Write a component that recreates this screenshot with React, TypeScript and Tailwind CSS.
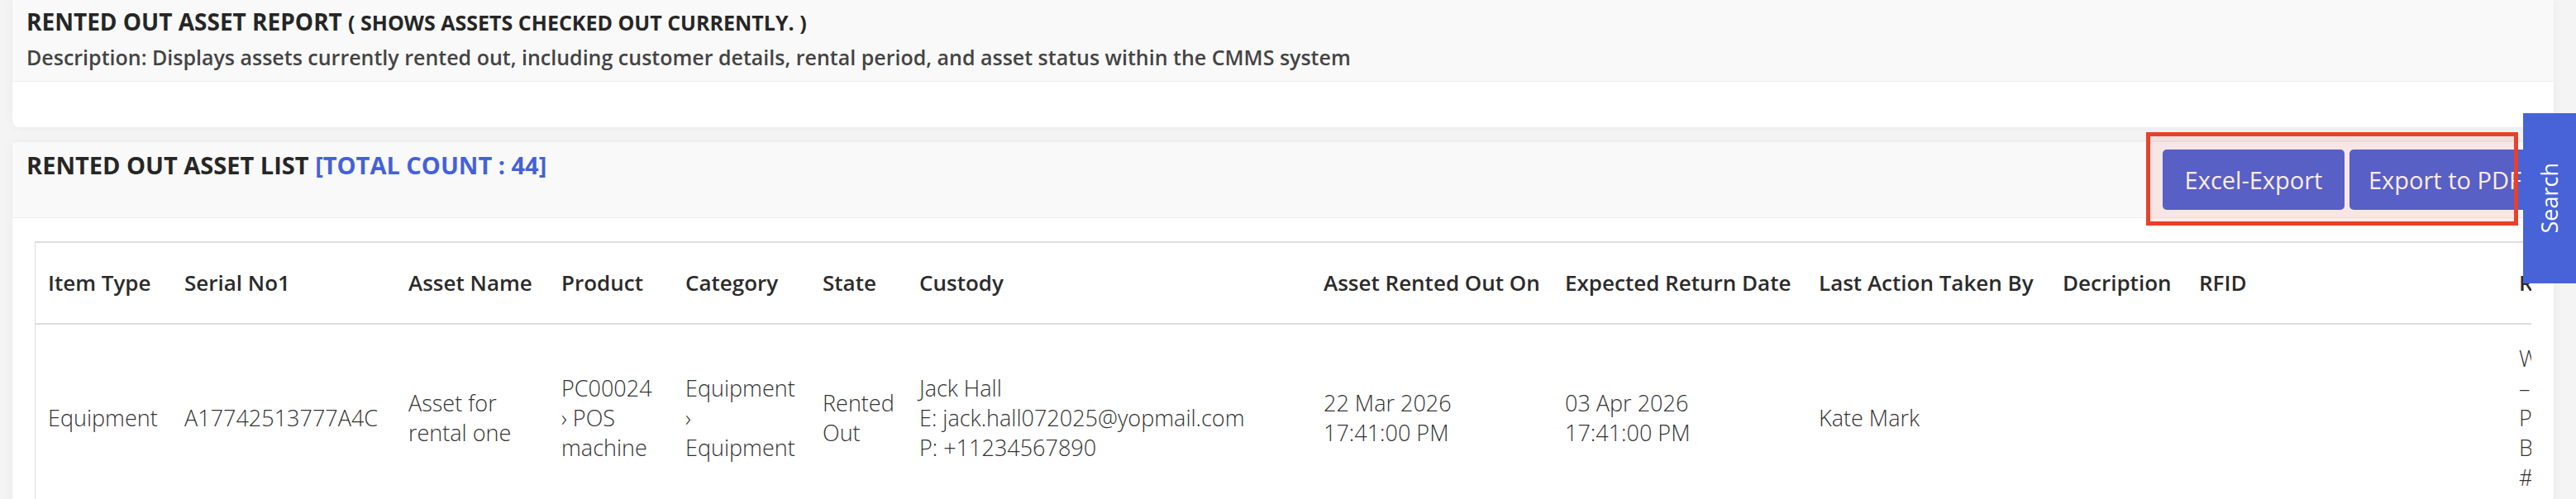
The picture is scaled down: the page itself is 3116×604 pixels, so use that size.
import { Fragment } from 'react';

type Column = { label: string; width: string };

const columns: Column[] = [
  { label: 'Item Type', width: 'w-[165px]' },
  { label: 'Serial No1', width: 'w-[271px]' },
  { label: 'Asset Name', width: 'w-[185px]' },
  { label: 'Product', width: 'w-[150px]' },
  { label: 'Category', width: 'w-[166px]' },
  { label: 'State', width: 'w-[117px]' },
  { label: 'Custody', width: 'w-[489px]' },
  { label: 'Asset Rented Out On', width: 'w-[292px]' },
  { label: 'Expected Return Date', width: 'w-[307px]' },
  { label: 'Last Action Taken By', width: 'w-[295px]' },
  { label: 'Decription', width: 'w-[165px]' },
  { label: 'RFID', width: 'w-[387px]' },
  { label: 'Remarks', width: 'w-[260px]' },
];

// one rented-out asset, each cell split in the lines it wraps to
const rows: string[][][] = [
  [
    ['Equipment'],
    ['A17742513777A4C'],
    ['Asset for', 'rental one'],
    ['PC00024', '› POS', 'machine'],
    ['Equipment', '›', 'Equipment'],
    ['Rented', 'Out'],
    ['Jack Hall', 'E: jack.hall072025@yopmail.com', 'P: +11234567890'],
    ['22 Mar 2026', '17:41:00 PM'],
    ['03 Apr 2026', '17:41:00 PM'],
    ['Kate Mark'],
    [],
    [],
    ['Walk-in', '–', 'Pos', 'Booking', '#RT-1024'],
  ],
];

export default function App() {
  return (
    <div className="relative min-h-screen w-[3116px] overflow-hidden bg-[#f4f4f4] font-['Open_Sans',sans-serif]">
      <div className="pl-[15px] pr-[27px]">
        {/* report heading card */}
        <div className="rounded-b-[8px] bg-white shadow-[0_0_12px_rgba(0,0,0,0.05)]">
          <div className="h-[99px] border-b border-[#ededf5] bg-[#f9f9f9] pl-[17px] pt-[7px]">
            <h1 className="text-[28px] leading-[38px] font-bold text-[#262626]">
              RENTED OUT ASSET REPORT <span className="text-[25px]">( SHOWS ASSETS CHECKED OUT CURRENTLY. )</span>
            </h1>
            <p className="mt-[8px] text-[25px] leading-[30px] font-semibold text-[#444444]">
              Description: Displays assets currently rented out, including customer details, rental period, and asset status within the CMMS system
            </p>
          </div>
          <div className="h-[55px]" />
        </div>

        {/* list card */}
        <div className="mt-[18px] rounded-t-[6px] bg-white shadow-[0_0_12px_rgba(0,0,0,0.05)]">
          <div className="flex h-[92px] items-start justify-between border-b border-[#ececec] bg-[#f9f9f9] pl-[17px] pr-[15px] pt-[9px]">
            <h2 className="text-[29px] leading-[38px] font-bold text-[#262626]">
              RENTED OUT ASSET LIST <span className="text-[#4461d8]">[TOTAL COUNT : 44]</span>
            </h2>
            <div className="flex gap-[6px]">
              <button className="h-[73px] w-[220px] rounded-[5px] bg-[#4863d7] text-[29px] font-normal text-white">
                Excel-Export
              </button>
              <button className="h-[73px] w-[232px] whitespace-nowrap rounded-[5px] bg-[#4863d7] pl-[23px] text-left text-[29px] font-normal text-white">
                Export to PDF
              </button>
            </div>
          </div>

          <div className="px-[27px] pt-[28px]">
            <div className="overflow-hidden border-t-2 border-l border-[#dddddd]">
              <table className="w-[3249px] table-fixed border-collapse">
                <thead>
                  <tr>
                    {columns.map((c) => (
                      <th
                        key={c.label}
                        className={`${c.width} h-[98px] whitespace-nowrap border-b-2 border-[#dddddd] px-[15px] text-left align-middle text-[26px] font-semibold text-[#2b2b2b]`}
                      >
                        {c.label}
                      </th>
                    ))}
                  </tr>
                </thead>
                <tbody>
                  {rows.map((row, i) => (
                    <tr key={i}>
                      {row.map((lines, j) => (
                        <td
                          key={j}
                          className="whitespace-nowrap px-[15px] py-[23px] align-middle text-[27px] leading-[36px] font-light text-[#333333]"
                        >
                          {lines.map((line, k) => (
                            <Fragment key={k}>
                              {k > 0 && <br />}
                              {line}
                            </Fragment>
                          ))}
                        </td>
                      ))}
                    </tr>
                  ))}
                </tbody>
              </table>
            </div>
          </div>
        </div>
      </div>

      {/* highlight drawn round the export buttons */}
      <div className="absolute left-[2596px] top-[160px] h-[113px] w-[450px] border-[5px] border-[#e8402a] bg-[#e8402a]/10" />

      {/* floating search tab */}
      <button className="absolute right-0 top-[137px] flex h-[206px] w-[64px] items-center justify-center bg-[#4863d7]">
        <span className="rotate-180 text-[27px] text-white [writing-mode:vertical-rl]">Search</span>
      </button>
    </div>
  );
}
